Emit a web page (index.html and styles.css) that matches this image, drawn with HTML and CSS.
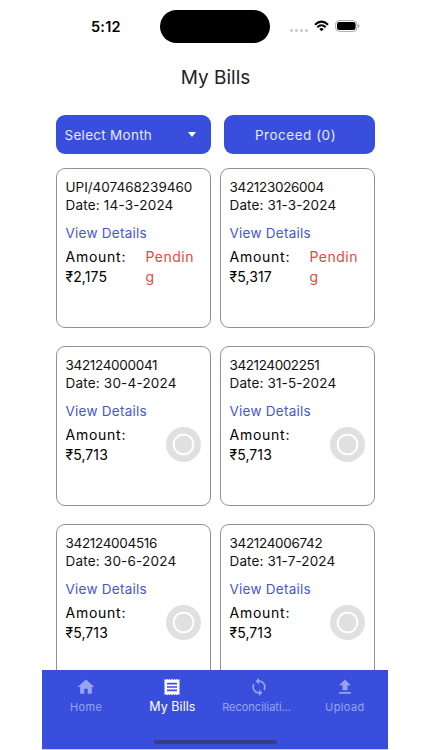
FILE: index.html
```
<!DOCTYPE html>
<html lang="en">
<head>
<meta charset="utf-8">
<title>My Bills</title>
<link rel="stylesheet" href="styles.css">
</head>
<body>
<div class="phone">
  <header class="status">
    <span class="time">5:12</span>
    <span class="island"></span>
    <span class="signals">
      <span class="dots"><i></i><i></i><i></i><i></i></span>
      <svg class="wifi" viewBox="0 0 16 12"><g fill="none" stroke="#000" stroke-width="2.1"><path d="M1 4.6Q8-2 15 4.6"/><path d="M3.5 7.3Q8 3 12.5 7.3"/></g><path d="M5.6 9.1Q8 7 10.4 9.1L8 11.6Z"/></svg>
      <svg class="battery" viewBox="0 0 25 12"><rect x=".6" y=".6" width="21.4" height="10.8" rx="3.6" fill="#fff" stroke="#aaa"/><rect x="2" y="2" width="18.6" height="8" rx="2.2"/><path d="M23 4v4q1.5-.6 1.5-2T23 4" fill="#aaa"/></svg>
    </span>
  </header>
  <h1>My Bills</h1>
  <div class="actions">
    <button class="select"><span>Select Month</span><i class="caret"></i></button>
    <button class="proceed"><span>Proceed (0)</span></button>
  </div>
  <main class="bills">
    <article class="card">
      <p class="number wide">UPI/407468239460</p><p class="date">Date: 14-3-2024</p>
      <a class="details">View Details</a>
      <div class="row"><div class="amount"><p class="label">Amount:</p><p class="value">₹2,175</p></div><p class="pending">Pendin<br>g</p></div>
    </article>
    <article class="card">
      <p class="number">342123026004</p><p class="date narrow">Date: 31-3-2024</p>
      <a class="details">View Details</a>
      <div class="row"><div class="amount"><p class="label">Amount:</p><p class="value">₹5,317</p></div><p class="pending">Pendin<br>g</p></div>
    </article>
    <article class="card">
      <p class="number">342124000041</p><p class="date">Date: 30-4-2024</p>
      <a class="details">View Details</a>
      <div class="row"><div class="amount"><p class="label">Amount:</p><p class="value">₹5,713</p></div><span class="radio"></span></div>
    </article>
    <article class="card">
      <p class="number narrow">342124002251</p><p class="date narrow">Date: 31-5-2024</p>
      <a class="details">View Details</a>
      <div class="row"><div class="amount"><p class="label">Amount:</p><p class="value">₹5,713</p></div><span class="radio"></span></div>
    </article>
    <article class="card">
      <p class="number">342124004516</p><p class="date">Date: 30-6-2024</p>
      <a class="details">View Details</a>
      <div class="row"><div class="amount"><p class="label">Amount:</p><p class="value">₹5,713</p></div><span class="radio"></span></div>
    </article>
    <article class="card">
      <p class="number">342124006742</p><p class="date narrow">Date: 31-7-2024</p>
      <a class="details">View Details</a>
      <div class="row"><div class="amount"><p class="label">Amount:</p><p class="value">₹5,713</p></div><span class="radio"></span></div>
    </article>
  </main>
  <nav class="tabs">
    <a class="tab"><svg viewBox="0 0 24 24"><path d="M10 20v-6h4v6h5v-8h3L12 3 2 12h3v8z"/></svg><span>Home</span></a>
    <a class="tab active"><svg viewBox="0 0 24 24"><path d="M18 17H6v-2h12v2zm0-4H6v-2h12v2zm0-4H6V7h12v2zM3 22l1.5-1.5L6 22l1.5-1.5L9 22l1.5-1.5L12 22l1.500-1.500L15 22l1.500-1.500L18 22l1.500-1.500L21 22V2l-1.500 1.500L18 2l-1.500 1.500L15 2l-1.500 1.500L12 2l-1.500 1.500L9 2 7.500 3.500 6 2 4.500 3.500 3 2v20z"/></svg><span>My Bills</span></a>
    <a class="tab recon"><svg viewBox="0 0 24 24"><path d="M12 4V1L8 5l4 4V6c3.310 0 6 2.690 6 6 0 1.010-.250 1.970-.700 2.800l1.460 1.460C19.540 15.030 20 13.570 20 12c0-4.420-3.580-8-8-8zm0 14c-3.310 0-6-2.690-6-6 0-1.010.250-1.970.700-2.800L5.240 7.740C4.460 8.970 4 10.430 4 12c0 4.420 3.580 8 8 8v3l4-4-4-4v3z"/></svg><span>Reconciliati…</span></a>
    <a class="tab upload"><svg viewBox="0 0 24 24"><path d="M5 20h14v-2H5v2zm0-10h4v6h6v-6h4l-7-7-7 7z"/></svg><span>Upload</span></a>
    <span class="home-bar"></span>
  </nav>
</div>
</body>
</html>
```
FILE: styles.css
```
* { box-sizing: border-box; margin: 0; padding: 0; }
body { background: #fff; font-family: Inter, "Noto Sans", sans-serif; overflow: hidden; }
p, span, h1, a { white-space: nowrap; }
.phone { width: 346px; height: 750px; margin-left: 42px; position: relative; display: flex; flex-direction: column; overflow: hidden; color: #111; }
.status { height: 53px; flex: none; display: grid; grid-template-columns: 118px 110px 1fr; align-items: center; }
.time { padding-left: 49px; font-size: 14.5px; font-weight: 600; color: #000; letter-spacing: .2px; }
.island { height: 33px; border-radius: 17px; background: #000; }
.signals { display: flex; align-items: center; padding-left: 20px; }
.dots { display: flex; gap: 2px; margin-top: 7px; width: 18px; }
.dots i { width: 3px; height: 3px; border-radius: 50%; background: #c8c8c8; }
.wifi { width: 15px; height: 12px; margin-left: 6px; margin-top: -1px; }
.battery { width: 25px; height: 12px; margin-left: 6px; margin-top: -1px; }
h1 { height: 62px; flex: none; line-height: 49px; text-align: center; font-size: 19px; font-weight: 400; color: #202028; padding-left: 1px; }
.actions { flex: none; display: grid; grid-template-columns: 155px 151px; gap: 13px; padding-left: 14px; height: 53px; }
button { height: 39px; border: 0; border-radius: 9px; background: #3a4ede; color: #e6e9ff; font: 400 13.5px Inter, sans-serif; letter-spacing: .28px; }
.select { display: flex; align-items: center; justify-content: space-between; padding: 0 15px 0 8.5px; }
.proceed { padding-right: 8px; letter-spacing: .52px; }
.caret { border: 4px solid transparent; border-top: 5px solid #fff; border-bottom: 0; }
.bills { flex: 1; display: grid; grid-template-columns: 155px 155px; grid-auto-rows: 160px; gap: 18px 9px; padding-left: 14px; min-height: 0; overflow: hidden; }
.card { border: 1px solid #929292; border-radius: 9px; padding: 8.5px 9px 0 8.5px; font-size: 13.5px; }
.number, .date { line-height: 18.5px; }
.number { letter-spacing: -.32px; }
.number.narrow { letter-spacing: -.4px; }
.number.wide { letter-spacing: -.01px; }
.date { letter-spacing: .2px; }
.date.narrow { letter-spacing: .14px; }
.details { display: block; margin-top: 9px; line-height: 18px; color: #4656cf; letter-spacing: .25px; }
.row { margin-top: 5px; display: flex; justify-content: space-between; font-size: 14px; line-height: 20px; color: #000; }
.label { letter-spacing: .75px; }
.value { letter-spacing: .1px; }
.pending { width: 55.5px; color: #e5483f; letter-spacing: .5px; }
.radio { width: 35px; height: 35px; margin-top: 2px; border-radius: 50%; flex: none; background: radial-gradient(circle, #e0e0e0 8.5px, #fff 9.2px 10.5px, #e0e0e0 11.2px); }
.tabs { position: relative; flex: none; height: 80px; background: #3a4ede; border-bottom: 1px solid #c5caee; display: grid; grid-template-columns: repeat(4, 1fr); padding-left: 1px; }
.tab { display: flex; flex-direction: column; align-items: center; color: #98a3f1; font-size: 11px; padding-top: 6.5px; letter-spacing: .4px; min-width: 0; }
.tab svg { width: 20px; height: 20px; fill: currentColor; }
.tab span { line-height: 20px; }
.tab.recon { letter-spacing: 0; }
.tab.recon span { margin-right: 4px; }
.tab.active { color: #fff; font-size: 12.5px; letter-spacing: .05px; }
.home-bar { position: absolute; left: 112px; bottom: 5px; width: 123px; height: 4px; border-radius: 2px; background: #383d85; }
```
